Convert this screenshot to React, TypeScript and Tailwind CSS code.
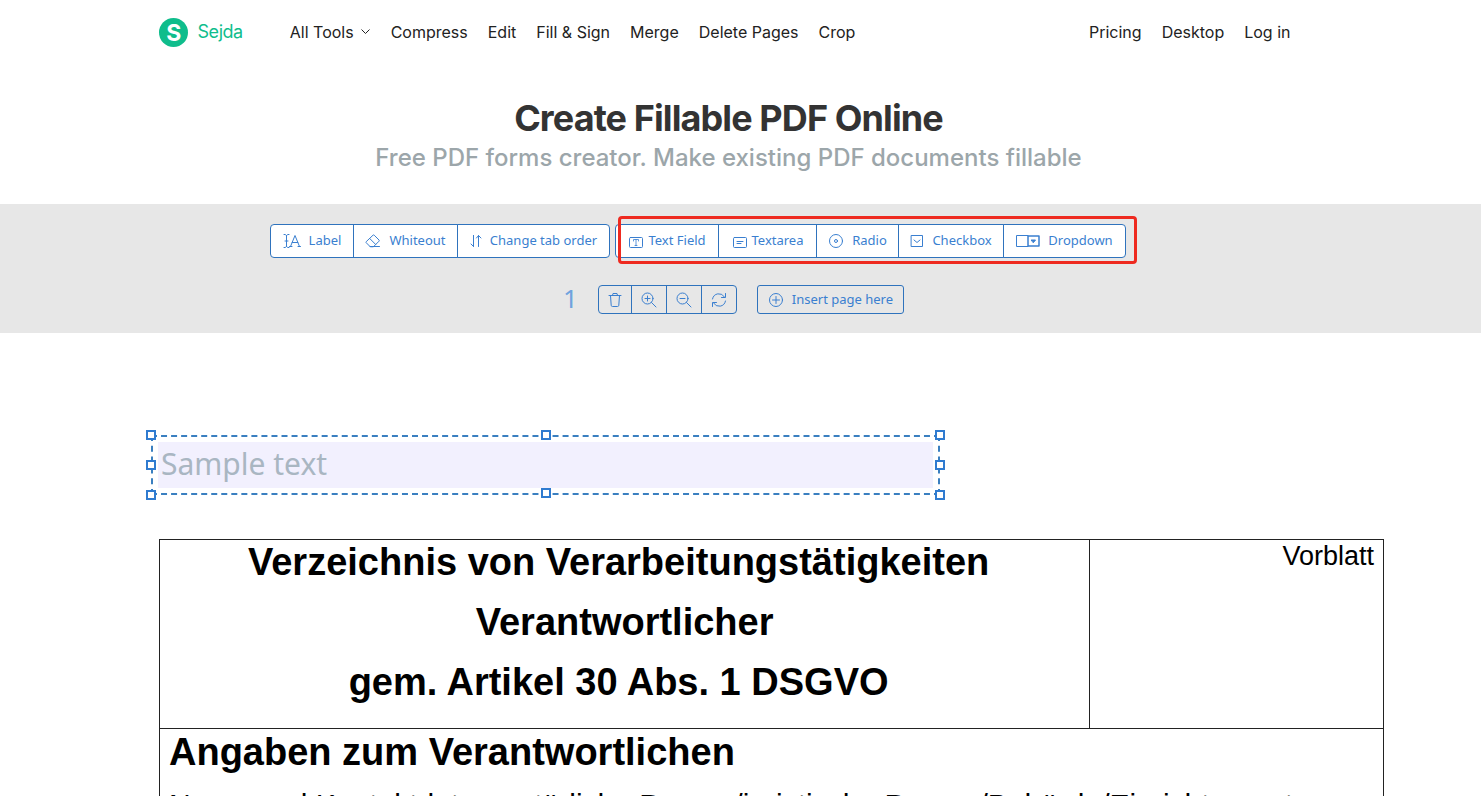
import type { ReactNode } from 'react';

const navLinks = ['Compress', 'Edit', 'Fill & Sign', 'Merge', 'Delete Pages', 'Crop'];
const accountLinks = ['Pricing', 'Desktop', 'Log in'];

const Icon = ({ width = 16, children }: { width?: number; children: ReactNode }) => (
  <svg
    width={width}
    height="16"
    viewBox={`0 0 ${width} 16`}
    fill="none"
    stroke="currentColor"
    strokeWidth="1"
    strokeLinecap="round"
    strokeLinejoin="round"
    className="shrink-0 overflow-visible"
    aria-hidden="true"
  >
    {children}
  </svg>
);

const LabelIcon = () => (
  <Icon width={18}>
    <path d="M1 1.500h1.200l1.300 1 1.300-1H6M1 14.500h1.200l1.300-1 1.300 1H6M3.500 2.500v11M2 8h3" />
    <path d="m7.500 13.500 4.500-11 4.500 11M9.200 9.500h5.600M6.500 13.500h2.500M15 13.500h2.500" />
  </Icon>
);

const EraserIcon = () => (
  <Icon>
    <path d="M5 13.500 1.200 9.700a.7.7 0 0 1 0-1L8 2.200a.9.9 0 0 1 1.200 0L14 7a.9.9 0 0 1 0 1.200L8.700 13.500ZM4.600 5.400l6 6M5 13.500h9.500" />
  </Icon>
);

const TabOrderIcon = () => (
  <Icon width={12}>
    <path d="M3.500 2.500v11M1 11l2.500 2.500V2.500M8.500 13.500v-11L11 5M8.500 2.500 6.500 5" />
  </Icon>
);

const TextFieldIcon = () => (
  <Icon>
    <rect x="1.500" y="4.500" width="13" height="10" rx="1" />
    <path d="M5.500 8V6.500h5V8M8 6.500v6M7 12.500h2" strokeWidth=".8" />
  </Icon>
);

const TextareaIcon = () => (
  <Icon>
    <rect x="1.500" y="4.500" width="13" height="10" rx="1" />
    <path d="M5 8.500h6M5 10.500h4" />
  </Icon>
);

const RadioIcon = () => (
  <Icon>
    <circle cx="8" cy="8" r="6.500" />
    <circle cx="8" cy="8" r="1.500" />
  </Icon>
);

const CheckboxIcon = () => (
  <Icon width={14}>
    <rect x="1.500" y="2.500" width="11" height="11" />
    <path d="m4 7 3 2.500L10 7" />
  </Icon>
);

const DropdownIcon = () => (
  <Icon width={24}>
    <path d="M12 2.500H.5v11H12" />
    <rect x="12" y="3" width="11" height="10" strokeWidth="1.500" />
    <path d="M15.500 7h4l-2 2.500Z" fill="currentColor" />
  </Icon>
);

const TrashIcon = () => (
  <Icon>
    <path d="M2 3.500h12M5.500 3.500 6 1.500h4l.5 2M3.500 3.500l.7 9.800a1.300 1.300 0 0 0 1.300 1.200h5a1.300 1.300 0 0 0 1.300-1.200l.7-9.800" />
  </Icon>
);

const ZoomInIcon = () => (
  <Icon>
    <path d="M6.500 4v5M4 6.500h5M10.500 10.500l4.500 4.500" />
    <circle cx="6.500" cy="6.500" r="5.500" />
  </Icon>
);

const ZoomOutIcon = () => (
  <Icon>
    <path d="M4 6.500h5M10.500 10.500l4.500 4.500" />
    <circle cx="6.500" cy="6.500" r="5.500" />
  </Icon>
);

const RotateIcon = () => (
  <Icon>
    <path d="M1.500 7A6.500 6.500 0 0 1 13.500 5M14.500 1.500v4h-4M14.500 9A6.500 6.500 0 0 1 2.500 11M1.500 14.500v-4h4" />
  </Icon>
);

const PlusCircleIcon = () => (
  <Icon>
    <circle cx="8" cy="8" r="6.500" />
    <path d="M8 4.500v7M4.500 8h7" />
  </Icon>
);

const editTools = [
  { label: 'Label', icon: <LabelIcon />, className: 'w-[84px] gap-2' },
  { label: 'Whiteout', icon: <EraserIcon />, className: 'w-[105px] gap-2' },
  { label: 'Change tab order', icon: <TabOrderIcon />, className: 'w-[153px] gap-2' }
];

const fieldTools = [
  { label: 'Text Field', icon: <TextFieldIcon />, className: 'w-[104px] gap-1' },
  { label: 'Textarea', icon: <TextareaIcon />, className: 'w-[99px] gap-1' },
  { label: 'Radio', icon: <RadioIcon />, className: 'w-[83px] gap-2' },
  { label: 'Checkbox', icon: <CheckboxIcon />, className: 'w-[106px] gap-2' },
  { label: 'Dropdown', icon: <DropdownIcon />, className: 'w-[123px] gap-2' }
];

const pageTools = [
  { label: 'Delete page', icon: <TrashIcon /> },
  { label: 'Zoom in', icon: <ZoomInIcon /> },
  { label: 'Zoom out', icon: <ZoomOutIcon /> },
  { label: 'Rotate page', icon: <RotateIcon /> }
];

const handles = [
  '-left-[7px] -top-[7px]',
  'left-1/2 -ml-[5px] -top-[7px]',
  '-right-[7px] -top-[7px]',
  '-left-[7px] top-1/2 -mt-[5px]',
  '-right-[7px] top-1/2 -mt-[5px]',
  '-left-[7px] -bottom-[7px]',
  'left-1/2 -ml-[5px] -bottom-[5px]',
  '-right-[7px] -bottom-[7px]'
];

const ToolGroup = ({ tools }: { tools: typeof editTools }) => (
  <div className="flex">
    {tools.map((tool) => (
      <button
        key={tool.label}
        type="button"
        className={`-ml-px flex h-[34px] items-center justify-center whitespace-nowrap border border-[#2f73bd] bg-white first:ml-0 first:rounded-l last:rounded-r ${tool.className}`}
      >
        {tool.icon}
        {tool.label}
      </button>
    ))}
  </div>
);

const Header = () => (
  <header className="mx-auto flex h-16 max-w-[1170px] items-center pl-[15px] pr-[23px] font-['Inter','Noto_Sans',sans-serif] text-base text-[#222]">
    <a href="#" className="mr-[47px] flex items-center gap-[10px] text-lg tracking-tight text-[#0fbd8c]">
      <svg width="29" height="29" viewBox="0 0 29 29" aria-hidden="true">
        <circle cx="14.500" cy="14.500" r="14.500" fill="#0fbd8c" />
        <text x="14.500" y="22.500" fontSize="23" fontWeight="700" textAnchor="middle" fill="#fff">S</text>
      </svg>
      Sejda
    </a>
    <nav className="flex flex-1 items-center gap-5 whitespace-nowrap">
      <button type="button" className="flex items-center gap-1.5">
        All Tools
        <svg width="11" height="8" viewBox="0 0 11 8" fill="none" stroke="currentColor" aria-hidden="true">
          <path d="m1.500 1.500 4 4 4-4" />
        </svg>
      </button>
      {navLinks.map((link) => (
        <a key={link} href="#">{link}</a>
      ))}
    </nav>
    <div className="flex gap-5 whitespace-nowrap">
      {accountLinks.map((link) => (
        <a key={link} href="#">{link}</a>
      ))}
    </div>
  </header>
);

const Toolbar = () => (
  <div className="h-[129px] bg-[#e7e7e7] pt-5 font-['Noto_Sans','Open_Sans',sans-serif] text-[13px] text-[#3a7fd0]">
    <div className="flex justify-center gap-[5px] pr-[85px]">
      <ToolGroup tools={editTools} />
      <div className="relative">
        <ToolGroup tools={fieldTools} />
        <div className="pointer-events-none absolute -bottom-[6px] -right-[11px] -top-[8px] left-[3px] rounded border-3 border-[#ee2a20]" />
      </div>
    </div>
    <div className="mt-[27px] flex h-[29px] items-center justify-center pr-[14px]">
      <span className="mr-5 pb-1 font-['Noto_Sans',sans-serif] text-[26px] leading-none text-[#6fa3de]">1</span>
      <div className="mr-5 flex">
        {pageTools.map((tool) => (
          <button
            key={tool.label}
            type="button"
            aria-label={tool.label}
            className="-ml-px flex h-[29px] w-9 items-center justify-center border border-[#2f73bd] first:ml-0 first:w-[34px] first:rounded-l last:rounded-r"
          >
            {tool.icon}
          </button>
        ))}
      </div>
      <button
        type="button"
        className="flex h-[29px] w-[147px] items-center justify-center gap-2 whitespace-nowrap rounded-[3px] border border-[#2f73bd]"
      >
        <PlusCircleIcon />
        Insert page here
      </button>
    </div>
  </div>
);

const SelectedField = () => (
  <div className="relative ml-[151px] w-[789px] border-2 border-dashed border-[#3a7fc0] p-[5px]">
    <input
      type="text"
      aria-label="Text field"
      placeholder="Sample text"
      className="block h-[46px] w-full bg-[#f2f0fe] px-[3px] pb-1 font-['Noto_Sans','Open_Sans',sans-serif] text-[30px] leading-none placeholder:text-[#a9b6c2]"
    />
    {handles.map((position) => (
      <span key={position} className={`absolute h-[10px] w-[10px] border-2 border-[#2f7bd0] bg-white ${position}`} />
    ))}
  </div>
);

const Document = () => (
  <main className="overflow-hidden pt-[102px] font-['Liberation_Sans',Arial,sans-serif] text-black">
    <SelectedField />
    <div className="ml-[159px] mr-[97px] mt-11">
      <table className="w-full table-fixed border-collapse">
        <tbody>
          <tr>
            <td className="h-[188px] w-[76%] border border-[#222] px-[9px] pb-4 text-center align-top text-[38px] leading-[60px] font-bold">
              <p className="-mt-2 pr-3">Verzeichnis von Verarbeitungstätigkeiten</p>
              <p>Verantwortlicher</p>
              <p className="pr-3">gem. Artikel 30 Abs. 1 DSGVO</p>
            </td>
            <td className="border border-[#222] px-[9px] text-right align-top text-[27px] leading-8">Vorblatt</td>
          </tr>
          <tr>
            <td colSpan={2} className="border border-[#222] px-[9px] align-top">
              <h2 className="text-[38px] leading-[46px] font-bold">Angaben zum Verantwortlichen</h2>
              <p className="mt-[14px] whitespace-nowrap text-[30px] leading-8">
                Name und Kontaktdaten natürliche Person/juristische Person/Behörde/Einrichtung etc.
              </p>
            </td>
          </tr>
        </tbody>
      </table>
    </div>
  </main>
);

const App = () => (
  <div className="h-screen overflow-hidden bg-white">
    <div className="pr-6">
      <Header />
      <div className="pt-8 pb-7 text-center font-['Inter','Noto_Sans',sans-serif]">
        <h1 className="text-4xl leading-11 font-bold tracking-tight text-[#333]">Create Fillable PDF Online</h1>
        <p className="text-2xl leading-9 font-medium text-[#9ca6aa]">Free PDF forms creator. Make existing PDF documents fillable</p>
      </div>
    </div>
    <Toolbar />
    <Document />
  </div>
);

export default App;
